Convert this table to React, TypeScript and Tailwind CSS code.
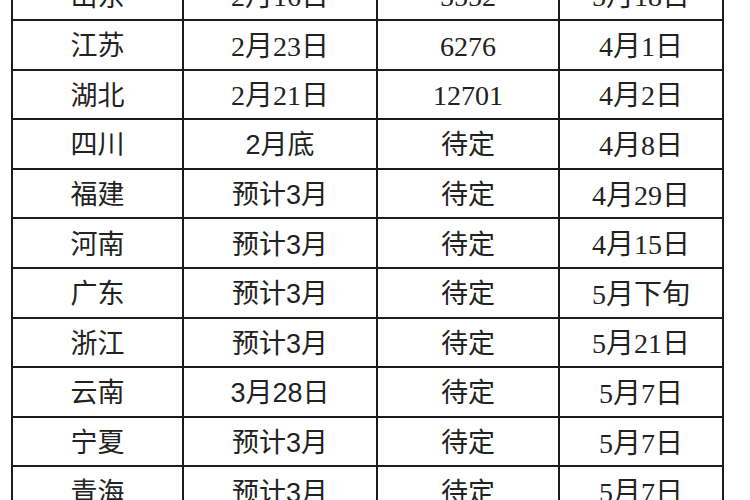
type Row = {
  prov: string;
  start: string;
  count: string;
  exam: string;
};

const rows: Row[] = [
  { prov: "山东", start: "2月16日", count: "5552", exam: "5月18日" },
  { prov: "江苏", start: "2月23日", count: "6276", exam: "4月1日" },
  { prov: "湖北", start: "2月21日", count: "12701", exam: "4月2日" },
  { prov: "四川", start: "2月底", count: "待定", exam: "4月8日" },
  { prov: "福建", start: "预计3月", count: "待定", exam: "4月29日" },
  { prov: "河南", start: "预计3月", count: "待定", exam: "4月15日" },
  { prov: "广东", start: "预计3月", count: "待定", exam: "5月下旬" },
  { prov: "浙江", start: "预计3月", count: "待定", exam: "5月21日" },
  { prov: "云南", start: "3月28日", count: "待定", exam: "5月7日" },
  { prov: "宁夏", start: "预计3月", count: "待定", exam: "5月7日" },
  { prov: "青海", start: "预计3月", count: "待定", exam: "5月7日" },
];

const serif = "font-['Liberation_Serif','Noto_Sans_CJK_SC',serif] text-[28px]";
const sans = "font-['Liberation_Sans','Noto_Sans_CJK_SC',sans-serif] text-[27px]";

// the February dates were typed with serif digits, the rest are sans
const startFont = (s: string) => (s.startsWith("2月2") || s.startsWith("2月1") ? serif : sans);
const countFont = (s: string) => (/\d/.test(s) ? serif : sans);

const cell = "border-2 border-[#1c1c1c] p-0 pt-[4px] text-center";

const App = () => {
  return (
    <div className="w-[750px] h-[500px] overflow-hidden bg-white">
      <table className="-mt-[30.6px] ml-[11px] border-collapse leading-none text-[#222]">
        <colgroup>
          <col className="w-[171px]" />
          <col className="w-[194px]" />
          <col className="w-[182px]" />
          <col className="w-[164px]" />
        </colgroup>
        <tbody>
          {rows.map((r, i) => (
            <tr key={i} className="h-[49.6px]">
              <td className={`${cell} ${sans}`}>{r.prov}</td>
              <td className={`${cell} ${startFont(r.start)}`}>{r.start}</td>
              <td className={`${cell} ${countFont(r.count)}`}>{r.count}</td>
              <td className={`${cell} ${serif}`}>{r.exam}</td>
            </tr>
          ))}
        </tbody>
      </table>
    </div>
  );
};

export default App;
